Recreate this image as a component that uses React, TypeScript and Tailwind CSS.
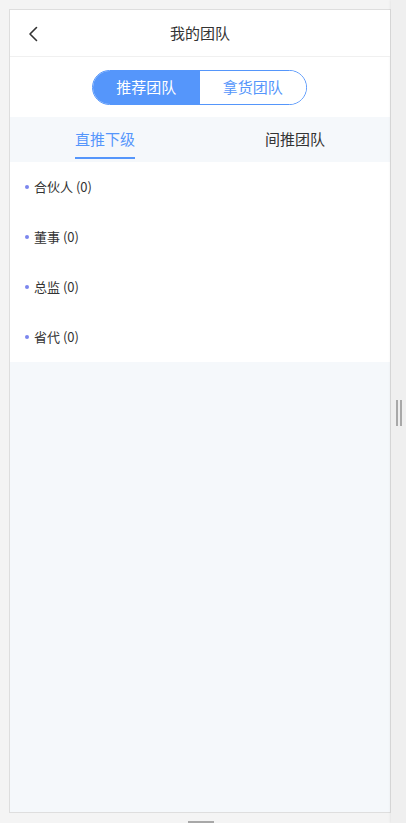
import React, { useState } from 'react';

const font = { fontFamily: '"Noto Sans CJK SC", "Noto Sans", sans-serif' };

const levels = [
  { name: '合伙人', count: 0 },
  { name: '董事', count: 0 },
  { name: '总监', count: 0 },
  { name: '省代', count: 0 },
];

export default function App() {
  const [mode, setMode] = useState<'recommend' | 'goods'>('recommend');
  const [tab, setTab] = useState<'direct' | 'indirect'>('direct');

  return (
    <div className="relative h-[823px] w-[406px] overflow-hidden bg-[#f4f4f4] pl-[9px] pt-[9px]" style={font}>
      {/* right drawer strip */}
      <div className="absolute right-0 top-0 h-full w-[15px] bg-[#efefef] shadow-[-1px_0_2px_rgba(0,0,0,0.06)]" />
      <div className="absolute left-[396px] top-[400px] flex gap-[2px]">
        <div className="h-[26px] w-[2px] bg-[#a8a8a8]" />
        <div className="h-[26px] w-[2px] bg-[#a8a8a8]" />
      </div>
      <div className="absolute left-[188px] top-[821px] h-[2px] w-[26px] bg-[#a8a8a8]" />

      {/* device */}
      <div className="flex h-[804px] w-[382px] flex-col border border-[#dedede] bg-[#f5f8fb]">
        <div className="relative flex h-[47px] items-center justify-center border-b border-[#f0f0f0] bg-white">
          <svg className="absolute left-[18px] top-[16px]" width="10" height="16" viewBox="0 0 10 16" fill="none">
            <path d="M8.5 1.5 L2 8 L8.5 14.5" stroke="#333" strokeWidth="1.6" strokeLinecap="round" strokeLinejoin="round" />
          </svg>
          <span className="text-[15px] text-[#333]">我的团队</span>
        </div>

        <div className="flex h-[60px] items-center justify-center bg-white pr-[1px]">
          <div className="flex h-[35px] w-[215px] overflow-hidden rounded-full border border-[#5596fb]">
            <button
              onClick={() => setMode('recommend')}
              className={`flex-1 text-[15px] ${mode === 'recommend' ? 'bg-[#5596fb] text-white' : 'bg-white text-[#5596fb]'}`}
            >
              推荐团队
            </button>
            <button
              onClick={() => setMode('goods')}
              className={`flex-1 text-[15px] ${mode === 'goods' ? 'bg-[#5596fb] text-white' : 'bg-white text-[#5596fb]'}`}
            >
              拿货团队
            </button>
          </div>
        </div>

        <div className="flex h-[45px] bg-[#f5f8fb]">
          <button onClick={() => setTab('direct')} className="flex flex-1 justify-center">
            <span className={`relative flex h-full items-center text-[15px] ${tab === 'direct' ? 'text-[#5596fb]' : 'text-[#333]'}`}>
              直推下级
              {tab === 'direct' && <span className="absolute bottom-[3px] left-0 h-[2px] w-full bg-[#5596fb]" />}
            </span>
          </button>
          <button onClick={() => setTab('indirect')} className="flex flex-1 justify-center">
            <span className={`relative flex h-full items-center text-[15px] ${tab === 'indirect' ? 'text-[#5596fb]' : 'text-[#333]'}`}>
              间推团队
              {tab === 'indirect' && <span className="absolute bottom-[3px] left-0 h-[2px] w-full bg-[#5596fb]" />}
            </span>
          </button>
        </div>

        <ul className="bg-white">
          {levels.map((l) => (
            <li key={l.name} className="flex h-[50px] items-center pl-[15px] text-[13px] text-[#333]">
              <span className="mr-[5px] h-[4px] w-[4px] rounded-full bg-[#7b86ee]" />
              {l.name} ({l.count})
            </li>
          ))}
        </ul>
      </div>
    </div>
  );
}
